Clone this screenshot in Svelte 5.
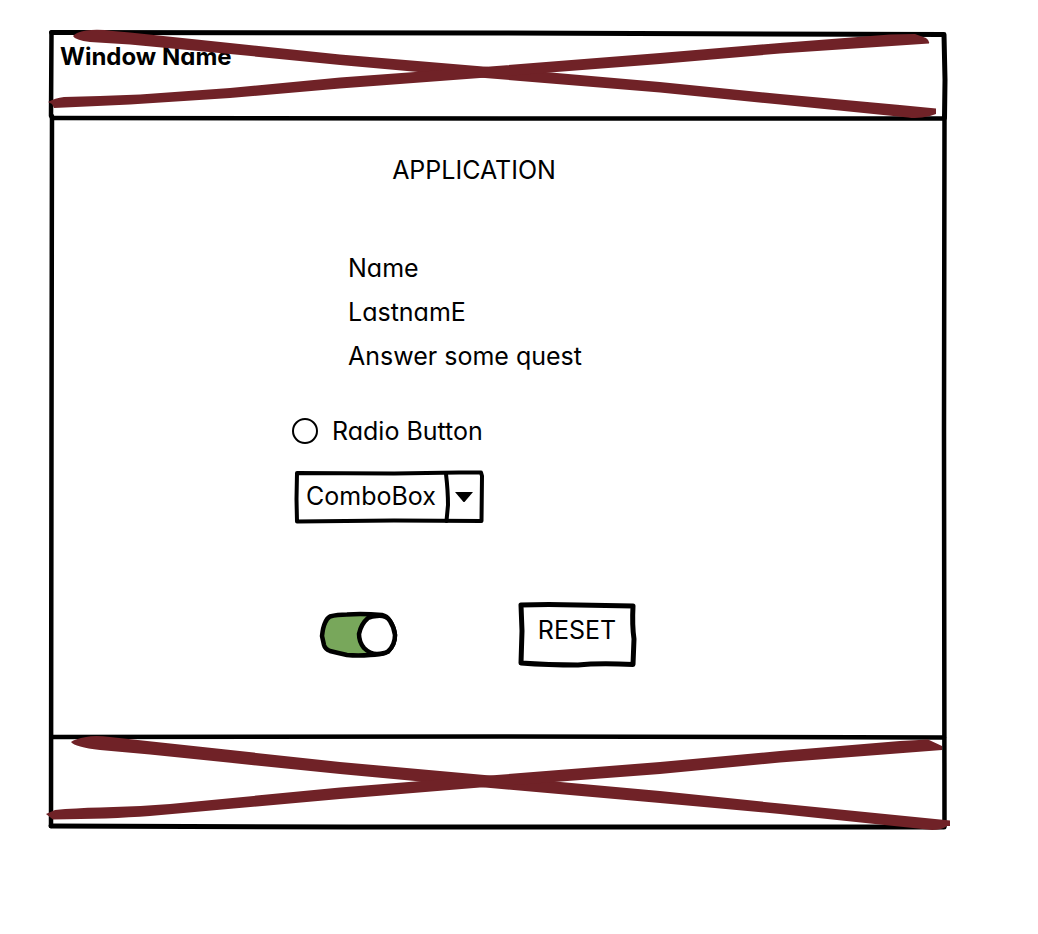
<script>
  const fields = ['Name', 'LastnamE', 'Answer some quest'];
  let choice = $state('');
  let combo = $state('ComboBox');
  let enabled = $state(true);

  function reset() {
    choice = '';
    combo = 'ComboBox';
    enabled = true;
  }
</script>

<div class="window">
  <svg class="ink" viewBox="0 0 898 800" preserveAspectRatio="none" aria-hidden="true">
    <g fill="none" stroke="#000" stroke-linejoin="round" stroke-linecap="round">
      <path stroke-width="5" d="M2.500 2.500 L450 3 L895 4.500 L896 50 L895.500 88" />
      <path stroke-width="4.500" d="M2.500 2.500 L2 86 M3 86 L2.500 400 L2 796 M895.500 86 L895 400 L895.500 796" />
      <path stroke-width="4.500" d="M3 88 L450 88.500 L895 88.500 M3 707 L450 706.500 L895 707.500" />
      <path stroke-width="5" d="M2 796 L300 797 L895 797" />
    </g>
  </svg>

  <header>
    <h1>Window Name</h1>
    <svg class="ink" viewBox="49 30 898 90" preserveAspectRatio="none" aria-hidden="true">
      <g fill="#702227">
        <path d="M73 36 Q76 32 86 30.500 Q98 29 113 31 L130 32.500 L230 43 L340 54.500 L483 66.500 L660 82 L780 94 L900 105 L936 108.500 V114 L930 116 Q918 119 908 117.500 L780 104.500 L660 92.500 L485 78 L340 65 L230 54 L130 44.500 L90 42 Q75 40 73 36Z" />
        <path d="M48 102 Q55 98 64 97 L100 96 L140 94.500 L230 88 L340 77.500 L490 66.500 L660 53 L780 43 L890 34.500 L915 34 L926 38 Q930 41 929 43.500 L780 53.500 L660 64 L480 78 L340 88.500 L230 98 L130 104.500 L54 108 L52 104Z" />
      </g>
    </svg>
  </header>

  <main>
    <form onsubmit={(event) => event.preventDefault()}>
      <h2>APPLICATION</h2>

      <ul>
        {#each fields as field}
          <li>{field}</li>
        {/each}
      </ul>

      <label class="radio">
        <input type="radio" name="choice" value="radio" bind:group={choice} />
        <span>Radio Button</span>
      </label>

      <div class="combo">
        <svg class="ink" viewBox="0 0 190 52" preserveAspectRatio="none" aria-hidden="true">
          <g fill="none" stroke="#000" stroke-width="4" stroke-linejoin="round" stroke-linecap="round">
            <path d="M3 2 L100 2.500 L165 1.500 L187 1.500 L188 5 L187.500 50 L100 49.500 L3 50.500 L2.500 28Z" />
            <path d="M152 3 Q154 20 154 34 L152.500 50" />
          </g>
          <path d="M161 21 H179 L170.500 31 H169.500Z" />
        </svg>
        <select aria-label="ComboBox" bind:value={combo}>
          <option>ComboBox</option>
        </select>
      </div>

      <div class="actions">
        <label class="toggle">
          <input type="checkbox" role="switch" aria-label="Toggle" bind:checked={enabled} />
          <svg class:off={!enabled} viewBox="0 0 78 46" aria-hidden="true">
            <path
              class="track"
              d="M10 4.500 Q17 2.500 27 2.500 Q43 1.500 62 3 Q67 4 70 9 Q74 15 75 23 Q75 33 68 39.500 Q60 43 50 43 Q38 44 27 43 Q18 41 10 39 Q5 37 4 33 L2 24 Q3 15 5 11 Q7 6 10 4.500Z"
            />
            <path
              class="knob"
              d="M57 4 Q66 3 70 9 Q74 15 75 23 Q75 33 68 39.500 Q64 42 57 42 Q50 42 44 36 Q39 30 39 22 Q41 12 48 6 Q52 4 57 4Z"
            />
          </svg>
        </label>

        <button type="button" onclick={reset}>
          <svg class="ink" viewBox="0 0 118 64" preserveAspectRatio="none" aria-hidden="true">
            <path fill="none" stroke="#000" stroke-width="5" stroke-linejoin="round" d="M3 2 Q30 1 60 2 L115 3 Q114 22 116 36 L115 61.500 Q80 60 60 62 Q30 62 3 60 L4 28Z" />
          </svg>
          <span>RESET</span>
        </button>
      </div>
    </form>
  </main>

  <footer>
    <svg class="ink" viewBox="49 735 898 94" preserveAspectRatio="none" aria-hidden="true">
      <g fill="#702227">
        <path d="M71 741 Q75 738 86 736 Q95 734 110 736 L340 761 L490 774.500 L660 790 L780 802.500 L950 819.500 V825 L947 825 Q942 829 932 829 L780 813 L660 802 L485 786.500 L340 773 L150 753.500 L100 749 Q75 746 71 741Z" />
        <path d="M46 813 L55 809 Q75 807 100 806.500 Q135 806 170 803 L340 786.500 L490 774.500 L660 761 L780 750 L900 740 L928 738.500 L942 745 V749 L780 761.500 L660 773 L480 786.500 L340 798 L150 815 Q110 818 53 818.500Z" />
      </g>
    </svg>
  </footer>
</div>

<style>
  :global(body) {
    margin: 0;
    background: #fff;
    color: #000;
    font-family: Inter, 'Noto Sans', sans-serif;
    font-size: 25px;
    line-height: 44px;
    font-feature-settings: 'cv11' 1;
  }

  .window {
    position: relative;
    margin: 30px 91px 104px 49px;
  }

  .ink {
    position: absolute;
    inset: 0;
    width: 100%;
    height: 100%;
    overflow: visible;
    pointer-events: none;
  }

  header {
    position: relative;
    box-sizing: border-box;
    min-height: 90px;
    padding: 5px 11px;
  }

  h1 {
    margin: 0;
    font-size: 24px;
  }

  h2 {
    margin: 0;
    padding-right: 48px;
    font-size: 25px;
    font-weight: 400;
    text-align: center;
  }

  main {
    display: flex;
    justify-content: center;
    padding: 28px 0 69px;
  }

  form {
    display: flex;
    flex-direction: column;
    width: 412px;
  }

  ul {
    margin: 54px 0 31px;
    padding: 0 0 0 56px;
    list-style: none;
  }

  .radio {
    display: flex;
    align-items: center;
    gap: 14px;
  }

  .radio input {
    appearance: none;
    box-sizing: border-box;
    width: 26px;
    height: 26px;
    margin: 0;
    border: 2px solid #000;
    border-radius: 50%;
  }

  .radio input:checked {
    background: radial-gradient(#000 40%, transparent 44%);
  }

  .combo {
    position: relative;
    width: 190px;
    margin: 18px 0 0 2px;
  }

  select {
    appearance: none;
    display: block;
    width: 100%;
    height: 52px;
    padding: 0 40px 2px 12px;
    border: 0;
    background: transparent;
    color: inherit;
    font: inherit;
    font-feature-settings: inherit;
  }

  .actions {
    display: flex;
    align-items: center;
    gap: 120px;
    margin-top: 80px;
    padding-left: 28px;
  }

  .toggle {
    position: relative;
    display: flex;
  }

  .toggle input {
    position: absolute;
    inset: 0;
    width: 100%;
    height: 100%;
    margin: 0;
    opacity: 0;
  }

  .toggle svg {
    width: 78px;
    height: 46px;
    stroke: #000;
    stroke-width: 4.5;
    stroke-linejoin: round;
    overflow: visible;
  }

  .track {
    fill: #78a75b;
  }

  .knob {
    fill: #fff;
  }

  .off .track {
    fill: #ccc;
  }

  .off .knob {
    transform: translateX(-36px);
  }

  button {
    position: relative;
    width: 118px;
    height: 64px;
    padding: 0 0 10px;
    border: 0;
    background: transparent;
    color: inherit;
    font: inherit;
  }

  footer {
    position: relative;
    min-height: 94px;
  }
</style>
